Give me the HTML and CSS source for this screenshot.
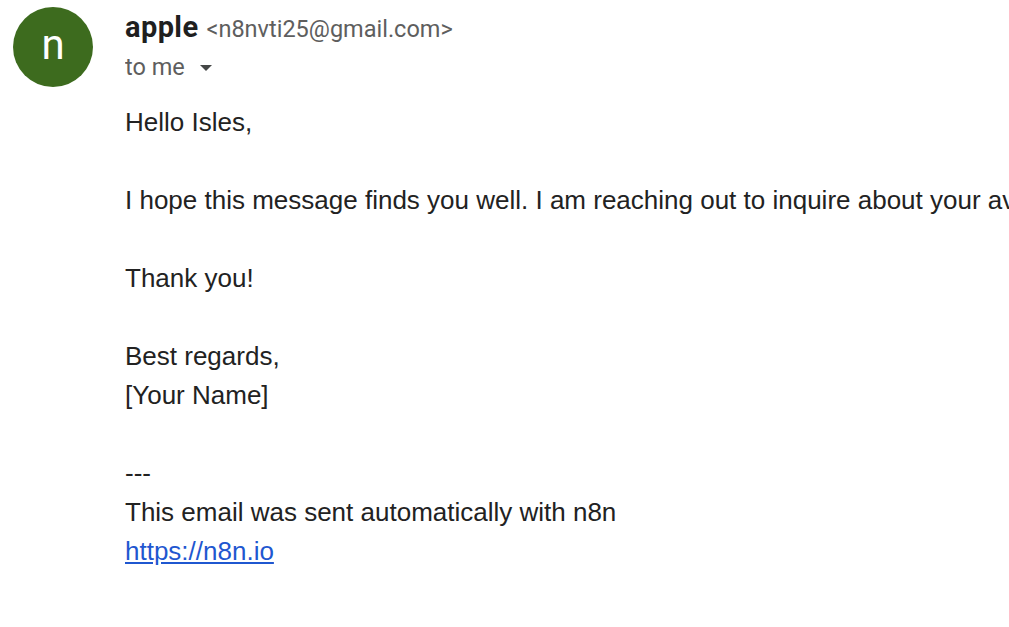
FILE: index.html
```html
<!DOCTYPE html>
<html>
<head>
<meta charset="utf-8">
<link rel="stylesheet" href="styles.css">
</head>
<body>
<div class="message">
  <div class="avatar">n</div>
  <div class="content">
    <div class="sender">
      <span class="name">apple</span>
      <span class="address">&lt;n8nvti25@gmail.com&gt;</span>
    </div>
    <div class="recipient">
      <span>to me</span>
      <svg class="caret" width="12" height="6" viewBox="0 0 12 6"><path d="M0 0 L12 0 L6 6 Z" fill="#444746"/></svg>
    </div>
    <div class="body">
      <p>Hello Isles,</p>
      <p class="nowrap">I hope this message finds you well. I am reaching out to inquire about your availability for a meeting next week.</p>
      <p>Thank you!</p>
      <p>Best regards,<br>[Your Name]</p>
      <p>---<br>This email was sent automatically with n8n<br><a href="https://n8n.io">https://n8n.io</a></p>
    </div>
  </div>
</div>
</body>
</html>
```

FILE: styles.css
```css
html, body {
  margin: 0;
  padding: 0;
  background: #ffffff;
  overflow: hidden;
}
.message {
  display: flex;
  align-items: flex-start;
  padding: 7px 0 0 13px;
}
.avatar {
  width: 80px;
  height: 80px;
  border-radius: 50%;
  background: #3d6b1e;
  color: #ffffff;
  font-family: Roboto, "Liberation Sans", sans-serif;
  font-size: 42px;
  line-height: 76px;
  text-align: center;
  flex-shrink: 0;
}
.content {
  margin-left: 32px;
  min-width: 0;
  overflow: hidden;
}
.sender {
  display: flex;
  align-items: baseline;
  gap: 8px;
  height: 40px;
  line-height: 40px;
}
.name {
  font-family: Roboto, "Liberation Sans", sans-serif;
  font-weight: 700;
  font-size: 29px;
  letter-spacing: 0.4px;
  color: #1f1f1f;
}
.address {
  font-family: Roboto, "Liberation Sans", sans-serif;
  font-size: 23.5px;
  color: #5e5e5e;
}
.recipient {
  display: flex;
  align-items: center;
  gap: 15px;
  height: 40px;
  font-family: Roboto, "Liberation Sans", sans-serif;
  font-size: 23.5px;
  color: #5e5e5e;
}
.caret {
  margin-top: 2px;
}
.body {
  margin-top: 16px;
  font-family: "Liberation Sans", Arial, sans-serif;
  font-size: 26px;
  line-height: 39px;
  color: #222222;
}
.body p {
  margin: 0 0 39px 0;
}
.nowrap {
  white-space: nowrap;
}
.body a {
  color: #1f57d0;
}
```
